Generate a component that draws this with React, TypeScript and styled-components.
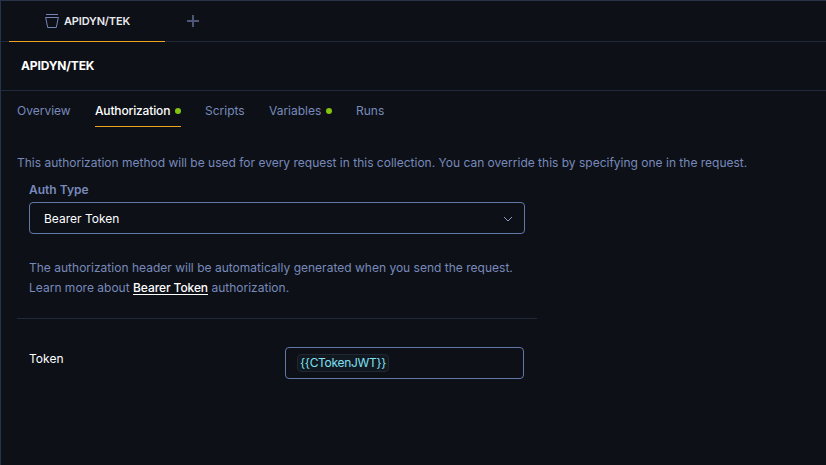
import React from "react";
import styled, { createGlobalStyle } from "styled-components";

const line = "#212a3b";
const muted = "#788abb";
const field = "#6278a8";

const GlobalStyle = createGlobalStyle`
  * { box-sizing: border-box; }
  body {
    margin: 0;
    background: #0d1017;
    color: #ffffff;
    font: 12px/20px Inter, "Liberation Sans", sans-serif;
  }
`;

const Window = styled.div`
  height: 465px;
  display: flex;
  flex-direction: column;
  overflow: hidden;
  border-top: 1px solid #28334a;
  border-left: 1px solid #28334a;
`;

const TabBar = styled.header`
  display: flex;
  height: 41px;
  padding-left: 8px;
  border-bottom: 1px solid ${line};
`;

const DocumentTab = styled.div`
  display: flex;
  align-items: center;
  width: 156px;
  height: 41px;
  padding-left: 36px;
  gap: 5px;
  border-bottom: 1px solid #eda320;
  font-size: 11px;
  font-weight: 600;
  color: #e8e9ec;
`;

const DocumentName = styled.span`
  letter-spacing: -0.17px;
`;

const AddButton = styled.button`
  display: flex;
  align-items: center;
  height: 40px;
  margin-left: 22px;
  padding: 0;
  border: 0;
  background: none;
  color: #4c5676;
`;

const Title = styled.h1`
  height: 49px;
  margin: 0;
  padding-left: 20px;
  border-bottom: 1px solid ${line};
  font-size: 12px;
  font-weight: 700;
  letter-spacing: -0.15px;
  line-height: 47px;
`;

const Nav = styled.nav`
  display: flex;
  gap: 24px;
  height: 36px;
  padding-left: 16px;
`;

const NavItem = styled.a<{ $active?: boolean; $width: number }>`
  display: flex;
  align-items: center;
  justify-content: space-between;
  width: ${(p) => p.$width}px;
  padding-top: 4px;
  border-bottom: 1px solid ${(p) => (p.$active ? "#eda320" : "transparent")};
  color: ${(p) => (p.$active ? "#ffffff" : muted)};
  font-weight: ${(p) => (p.$active ? 500 : 400)};
  letter-spacing: ${(p) => (p.$active ? "-0.15px" : "0")};
  white-space: nowrap;
`;

const Dot = styled.i`
  width: 6px;
  height: 6px;
  border-radius: 50%;
  background: #84c40f;
`;

const Content = styled.main`
  padding: 26px 0 0 16px;
  color: ${muted};
`;

const Intro = styled.p`
  margin: 0;
  white-space: nowrap;
`;

const AuthForm = styled.section`
  width: 520px;
  padding: 7px 12px 20px;
  border-bottom: 1px solid ${line};
`;

const Label = styled.div`
  height: 22px;
  font-weight: 600;
`;

const Select = styled.div`
  display: flex;
  align-items: center;
  justify-content: space-between;
  height: 32px;
  padding: 1px 11px 0 14px;
  border: 1px solid ${field};
  border-radius: 4px;
  color: #ffffff;
`;

const Help = styled.p`
  margin: 24px 0 0;
  letter-spacing: 0.01px;
  white-space: nowrap;
`;

const HelpLink = styled.a`
  color: #ffffff;
  font-weight: 500;
  letter-spacing: -0.09px;
  text-decoration: underline;
  text-underline-offset: 2px;
`;

const TokenRow = styled.div`
  display: flex;
  width: 507px;
  padding: 28px 0 0 12px;
  color: #ffffff;
`;

const TokenLabel = styled.label`
  width: 256px;
  padding-top: 2px;
  letter-spacing: 0.05px;
`;

const TokenField = styled.div`
  display: flex;
  align-items: center;
  flex: 1;
  height: 32px;
  padding-left: 11px;
  border: 1px solid ${field};
  border-radius: 4px;
`;

const Variable = styled.span`
  width: 92px;
  height: 18px;
  padding: 0 2px;
  border: 1px solid #1f2733;
  border-radius: 4px;
  background: #12181f;
  color: #7fe0f5;
  letter-spacing: -0.3px;
  line-height: 16px;
`;

const CollectionIcon = () => (
  <svg width="14" height="14" viewBox="0 0 14 14" fill="none" stroke="#7485b4">
    <path d="M1 .5h12M.5 3.5h13M.7 3.5l2 10h8.6l2-10" />
  </svg>
);

const PlusIcon = () => (
  <svg width="12" height="12" viewBox="0 0 12 12" fill="none" stroke="currentColor" strokeWidth="2">
    <path d="M6 0v12M0 6h12" />
  </svg>
);

const ChevronIcon = () => (
  <svg width="10" height="6" viewBox="0 0 10 6" fill="none" stroke="#8d9aba">
    <path d="M1 1l4 4 4-4" />
  </svg>
);

const tabs = [
  { name: "Overview", width: 54 },
  { name: "Authorization", width: 86, active: true, dot: true },
  { name: "Scripts", width: 40 },
  { name: "Variables", width: 63, dot: true },
  { name: "Runs", width: 28 },
];

export default function App() {
  return (
    <Window>
      <GlobalStyle />
      <TabBar>
        <DocumentTab>
          <CollectionIcon />
          <DocumentName>APIDYN/TEK</DocumentName>
        </DocumentTab>
        <AddButton aria-label="New tab">
          <PlusIcon />
        </AddButton>
      </TabBar>
      <Title>APIDYN/TEK</Title>
      <Nav>
        {tabs.map((t) => (
          <NavItem key={t.name} $active={t.active} $width={t.width}>
            {t.name}
            {t.dot && <Dot />}
          </NavItem>
        ))}
      </Nav>
      <Content>
        <Intro>
          This authorization method will be used for every request in this collection. You can
          override this by specifying one in the request.
        </Intro>
        <AuthForm>
          <Label>Auth Type</Label>
          <Select>
            Bearer Token
            <ChevronIcon />
          </Select>
          <Help>
            The authorization header will be automatically generated when you send the request.
            <br />
            Learn more about <HelpLink>Bearer Token</HelpLink> authorization.
          </Help>
        </AuthForm>
        <TokenRow>
          <TokenLabel>Token</TokenLabel>
          <TokenField>
            <Variable>{"{{CTokenJWT}}"}</Variable>
          </TokenField>
        </TokenRow>
      </Content>
    </Window>
  );
}
